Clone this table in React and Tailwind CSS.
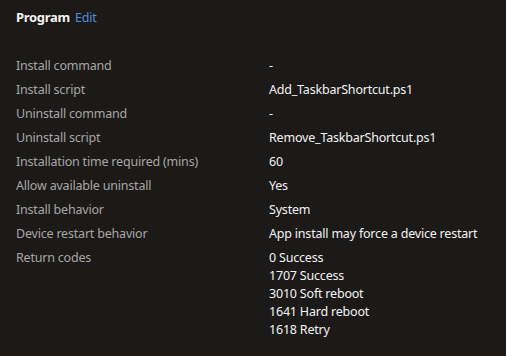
const rows = [
  ['Install command', ['-']],
  ['Install script', ['Add_TaskbarShortcut.ps1']],
  ['Uninstall command', ['-']],
  ['Uninstall script', ['Remove_TaskbarShortcut.ps1']],
  ['Installation time required (mins)', ['60']],
  ['Allow available uninstall', ['Yes']],
  ['Install behavior', ['System']],
  ['Device restart behavior', ['App install may force a device restart']],
  ['Return codes', ['0 Success', '1707 Success', '3010 Soft reboot', '1641 Hard reboot', '1618 Retry']],
];

export default function App() {
  return (
    <div
      className="w-[506px] h-[356px] bg-[#1b1a19] px-4 pt-[7px] overflow-hidden"
      style={{ fontFamily: '"Segoe UI", "Noto Sans", sans-serif' }}
    >
      <div className="flex items-baseline gap-[5px] leading-5">
        <span className="text-[13px] font-bold tracking-[-0.3px] text-[#f3f2f1]">Program</span>
        <span className="text-[12.5px] tracking-[-0.2px] text-[#4f8fdc]">Edit</span>
      </div>
      <div className="mt-[26px] grid grid-cols-[253px_1fr] text-[12.5px] tracking-[-0.2px]">
        {rows.map(([label, values]) => (
          <div key={label} className="contents">
            <div className="py-[3px] leading-[18px] text-[#a8a6a4]">{label}</div>
            <div className="py-[3px] leading-[18px] text-[#f3f2f1] whitespace-nowrap">
              {values.map((v) => (
                <div key={v}>{v}</div>
              ))}
            </div>
          </div>
        ))}
      </div>
    </div>
  );
}
